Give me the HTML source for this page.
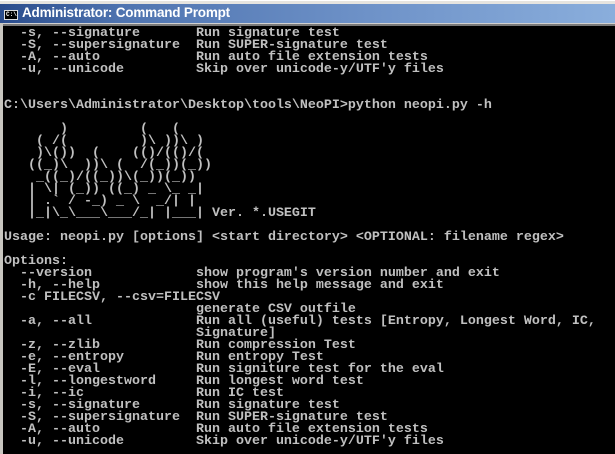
<!DOCTYPE html>
<html><head><style>
html,body{margin:0;padding:0;width:615px;height:454px;overflow:hidden;background:#000}
#top{position:absolute;left:0;top:0;width:615px;height:4px;background:#e6e4df;border-top:1px solid #fff}
#title{position:absolute;left:0;top:4px;width:615px;height:19px;background:linear-gradient(90deg,#2a4c8c 0%,#4f74b0 20%,#6e92c8 60%,#8aaedc 100%)}
#title span{position:absolute;left:22px;top:1px;color:#fff;font:bold 13.5px "Liberation Sans",sans-serif;letter-spacing:-0.2px}
#icon{position:absolute;left:4px;top:6px;width:14px;height:10px;background:#000;border:1px solid #ddd;box-sizing:border-box}
#icon b{position:absolute;left:1px;top:0;font:bold 6px "Liberation Mono",monospace;color:#fff}
#sep{position:absolute;left:0;top:23px;width:615px;height:2px;background:#7a7a7a;border-top:1px solid #d0d0d0}
#lb{position:absolute;left:0;top:23px;width:3px;height:431px;background:#c8c6c0}
pre{position:absolute;left:4px;top:28px;margin:0;color:#c0c0c0;font:bold 13.33px/12px "Liberation Mono",monospace;white-space:pre}
</style></head><body>
<div id="top"></div>
<div id="title"><div id="icon"><b>C:\</b></div><span>Administrator: Command Prompt</span></div>
<div id="sep"></div>
<div id="lb"></div>
<pre>  -s, --signature       Run signature test
  -S, --supersignature  Run SUPER-signature test
  -A, --auto            Run auto file extension tests
  -u, --unicode         Skip over unicode-y/UTF'y files


C:\Users\Administrator\Desktop\tools\NeoPI&gt;python neopi.py -h

       )         (   (
    ( /(         )\ ))\ )
    )\())  (    (()/(()/(
   ((_)\  ))\ (  /(_))(_))
    _((_)/((_))\(_))(_))
   | \| (_)) ((_) _ \_ _|
   | .` / -_) _ \  _/| |
   |_|\_\___\___/_| |___| Ver. *.USEGIT

Usage: neopi.py [options] &lt;start directory&gt; &lt;OPTIONAL: filename regex&gt;

Options:
  --version             show program's version number and exit
  -h, --help            show this help message and exit
  -c FILECSV, --csv=FILECSV
                        generate CSV outfile
  -a, --all             Run all (useful) tests [Entropy, Longest Word, IC,
                        Signature]
  -z, --zlib            Run compression Test
  -e, --entropy         Run entropy Test
  -E, --eval            Run signiture test for the eval
  -l, --longestword     Run longest word test
  -i, --ic              Run IC test
  -s, --signature       Run signature test
  -S, --supersignature  Run SUPER-signature test
  -A, --auto            Run auto file extension tests
  -u, --unicode         Skip over unicode-y/UTF'y files</pre>
</body></html>
